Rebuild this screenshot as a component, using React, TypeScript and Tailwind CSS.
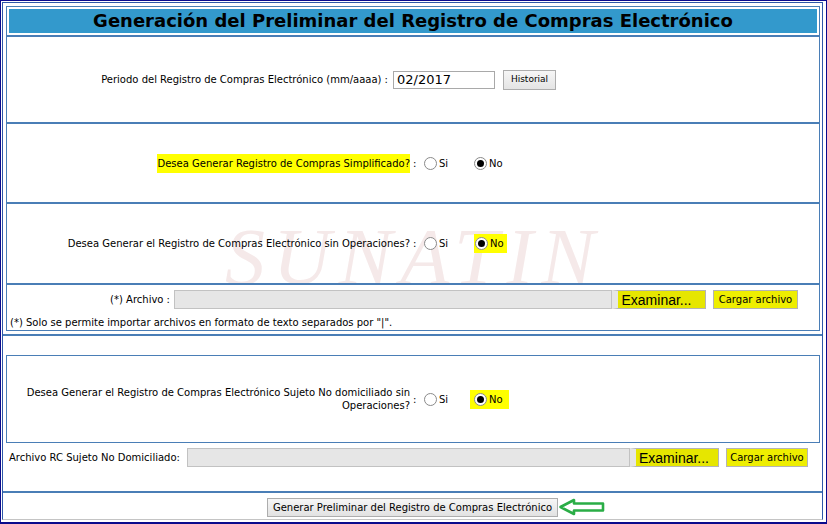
import React from "react";

const F = "font-['DejaVu_Sans',Verdana,sans-serif]";

function Radio({ checked }: { checked?: boolean }) {
  return (
    <span className="inline-flex w-[13px] h-[13px] shrink-0 items-center justify-center rounded-full border border-[#8a8a8a] bg-white">
      {checked && <span className="block w-[7px] h-[7px] rounded-full bg-black" />}
    </span>
  );
}

function SiNo({ hl, wide }: { hl?: boolean; wide?: boolean }) {
  return (
    <div className="flex items-center">
      <div className="w-[14px] pl-[3px]">:</div>
      <div className="flex w-[50px] items-center">
        <Radio />
        <span className="ml-[2px]">Si</span>
      </div>
      <div
        className={
          hl
            ? wide
              ? "flex items-center bg-[#ffff00] -ml-[4px] pl-[4px] pr-[6px] py-[2px]"
              : "flex items-center bg-[#ffff00] pl-[1px] pr-[3px] py-[2px]"
            : "flex items-center"
        }
      >
        <Radio checked />
        <span className="ml-[2px]">No</span>
      </div>
    </div>
  );
}

function Line() {
  return <div className="h-[2px] bg-[#4a7eb6]" />;
}

export default function App() {
  return (
    <div
      className={`${F} text-[10px] text-black w-[827px] h-[524px] bg-white border-t border-l border-r border-b-2 border-[#0a0a8c] pt-[1px] pl-[1px] pr-[3px] pb-[2px] overflow-hidden`}
    >
      <div className="h-[518px] border border-[#2e58a8] border-b-[#c4c4c4] flex flex-col">
        {/* top table */}
        <div className="mt-[3px] ml-[3px] mr-[2px] h-[325px] border border-[#4a7eb6] flex flex-col">
          <div className="h-[28px] px-[2px] pt-[2px] pb-[2px]">
            <div className="h-[24px] bg-[#3399cc] flex items-center justify-center">
              <span className="font-bold text-[18px] leading-none">
                Generación del Preliminar del Registro de Compras Electrónico
              </span>
            </div>
          </div>
          <Line />
          {/* periodo */}
          <div className="h-[85px] flex items-center">
            <div className="w-[381px] text-right whitespace-nowrap">
              Periodo del Registro de Compras Electrónico (mm/aaaa) :
            </div>
            <div className="ml-[5px] w-[102px] h-[18px] border border-[#a9a9a9] bg-white flex items-center pl-[3px] text-[13px] leading-none">
              02/2017
            </div>
            <button className="ml-[8px] w-[53px] h-[20px] border border-[#adadad] bg-gradient-to-b from-[#f6f6f6] to-[#e4e4e4] text-[9px] leading-none">
              Historial
            </button>
          </div>
          <Line />
          {/* simplificado */}
          <div className="h-[78px] flex items-center">
            <div className="w-[403px] flex justify-end">
              <span className="bg-[#ffff00] py-[2px] whitespace-nowrap">
                Desea Generar Registro de Compras Simplificado?
              </span>
            </div>
            <SiNo />
          </div>
          <Line />
          {/* sin operaciones */}
          <div className="h-[79px] flex items-center relative overflow-hidden">
            <div className="absolute left-[218px] top-[13px] pointer-events-none select-none font-['Liberation_Serif',serif] italic text-[80px] leading-none tracking-[8px] text-[#f5e9e9]">
              SUNATIN
            </div>
            <div className="relative w-[403px] text-right whitespace-nowrap">
              Desea Generar el Registro de Compras Electrónico sin Operaciones?
            </div>
            <div className="relative">
              <SiNo hl />
            </div>
          </div>
          <Line />
          {/* archivo */}
          <div className="h-[45px] flex flex-col pt-[5px]">
            <div className="flex items-center h-[19px]">
              <div className="w-[163px] text-right whitespace-nowrap">(*) Archivo :</div>
              <div className="ml-[4px] w-[438px] h-[19px] bg-[#e6e6e6] border border-[#c2c2c2]" />
              <button className="w-[94px] h-[19px] border border-[#b4b4b4] bg-[#e6e600] font-['Liberation_Sans',Arial,sans-serif] text-[14px] leading-none border-l-[6px] border-l-[#e6e6e6] pr-[10px]">
                Examinar...
              </button>
              <button className="ml-[7px] w-[85px] h-[19px] border border-[#b4b4b4] bg-[#eeee00] text-[10px] leading-none">
                Cargar archivo
              </button>
            </div>
            <div className="pl-[3px] mt-[6px] whitespace-nowrap">
              (*) Solo se permite importar archivos en formato de texto separados por "|".
            </div>
          </div>
        </div>
        <div className="h-[3px]" />
        <Line />
        <div className="h-[19px]" />
        {/* sujeto no domiciliado */}
        <div className="ml-[3px] mr-[2px] h-[88px] border border-[#4a7eb6] flex items-center">
          <div className="w-[403px] text-right leading-[13px]">
            <div className="whitespace-nowrap">
              Desea Generar el Registro de Compras Electrónico Sujeto No domiciliado sin
            </div>
            <div>Operaciones?</div>
          </div>
          <SiNo hl wide />
        </div>
        {/* archivo rc */}
        <div className="h-[48px] pt-[5px]">
          <div className="flex items-center h-[19px]">
            <div className="w-[184px] pl-[6px] whitespace-nowrap">Archivo RC Sujeto No Domiciliado:</div>
            <div className="w-[443px] h-[19px] bg-[#e6e6e6] border border-[#c2c2c2]" />
            <button className="w-[89px] h-[19px] border border-[#b4b4b4] bg-[#e6e600] font-['Liberation_Sans',Arial,sans-serif] text-[14px] leading-none border-l-[6px] border-l-[#e6e6e6] pr-[6px]">
              Examinar...
            </button>
            <button className="ml-[7px] w-[82px] h-[19px] border border-[#b4b4b4] bg-[#eeee00] text-[10px] leading-none">
              Cargar archivo
            </button>
          </div>
        </div>
        <Line />
        {/* bottom */}
        <div className="h-[26px] pt-[5px] flex items-start">
          <button className="ml-[264px] w-[291px] h-[19px] border border-[#adadad] bg-gradient-to-b from-[#f6f6f6] to-[#e2e2e2] text-[10px] leading-none whitespace-nowrap">
            Generar Preliminar del Registro de Compras Electrónico
          </button>
          <svg width="48" height="18" viewBox="0 0 48 18">
            <path
              d="M2.5 9 L16 2 L16 5.5 L45 5.5 L45 12.5 L16 12.5 L16 16 Z"
              fill="white"
              stroke="#2aad46"
              strokeWidth="2.6"
              strokeLinejoin="round"
            />
          </svg>
        </div>
      </div>
    </div>
  );
}
